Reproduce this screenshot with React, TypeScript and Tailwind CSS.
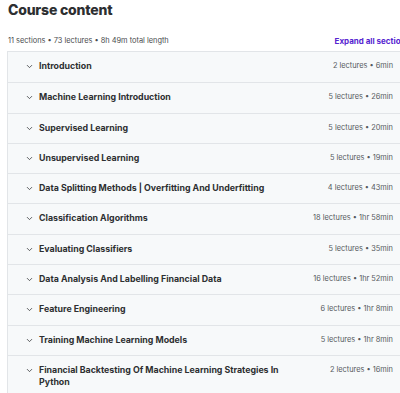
import { ChevronDown } from "lucide-react";

type Section = {
  title: string;
  lectures: number;
  length: string;
};

const sections: Section[] = [
  { title: "Introduction", lectures: 2, length: "6min" },
  { title: "Machine Learning Introduction", lectures: 5, length: "26min" },
  { title: "Supervised Learning", lectures: 5, length: "20min" },
  { title: "Unsupervised Learning", lectures: 5, length: "19min" },
  {
    title: "Data Splitting Methods | Overfitting And Underfitting",
    lectures: 4,
    length: "43min",
  },
  { title: "Classification Algorithms", lectures: 18, length: "1hr 58min" },
  { title: "Evaluating Classifiers", lectures: 5, length: "35min" },
  {
    title: "Data Analysis And Labelling Financial Data",
    lectures: 16,
    length: "1hr 52min",
  },
  { title: "Feature Engineering", lectures: 6, length: "1hr 8min" },
  { title: "Training Machine Learning Models", lectures: 5, length: "1hr 8min" },
  {
    title: "Financial Backtesting Of Machine Learning Strategies In Python",
    lectures: 2,
    length: "16min",
  },
];

export default function App() {
  return (
    <div className="h-[393px] w-[400px] overflow-hidden bg-white font-['Inter',sans-serif] text-[#2d2f31]">
      <div className="w-[410px] pl-[7px]">
        <h2 className="pl-[1px] pt-[2px] text-[14px] leading-[16px] font-extrabold tracking-[-0.2px]">
          Course content
        </h2>

        <div className="mt-[16px] flex items-center justify-between pl-[1px]">
          <p className="text-[7.4px] leading-[14px] text-[#4a4c4e]">
            11 sections • 73 lectures • 8h 49m total length
          </p>
          <button className="whitespace-nowrap text-[8px] font-bold leading-[14px] text-[#5624d0]">
            Expand all sections
          </button>
        </div>

        <div className="mt-[3px] border border-[#e2e5e8]">
          {sections.map((section, index) => (
            <SectionRow key={index} section={section} first={index === 0} />
          ))}
        </div>
      </div>
    </div>
  );
}

function SectionRow({ section, first }: { section: Section; first: boolean }) {
  return (
    <div
      className={`flex min-h-[30.3px] items-start bg-[#f7f9fa] pr-[16px] pl-[17px] ${
        first ? "" : "border-t border-[#e2e5e8]"
      }`}
    >
      <div className="flex flex-1 items-start gap-[5px] pt-[8px] pb-[8px]">
        <ChevronDown
          className="mt-[2px] h-[9px] w-[9px] shrink-0 text-[#2d2f31]"
          strokeWidth={2}
        />
        <span className="max-w-[250px] text-[8.8px] leading-[12px] font-bold">
          {section.title}
        </span>
      </div>
      <span className="shrink-0 pt-[8px] text-[7.4px] leading-[12px] text-[#565a5e]">
        {section.lectures} lectures • {section.length}
      </span>
    </div>
  );
}
